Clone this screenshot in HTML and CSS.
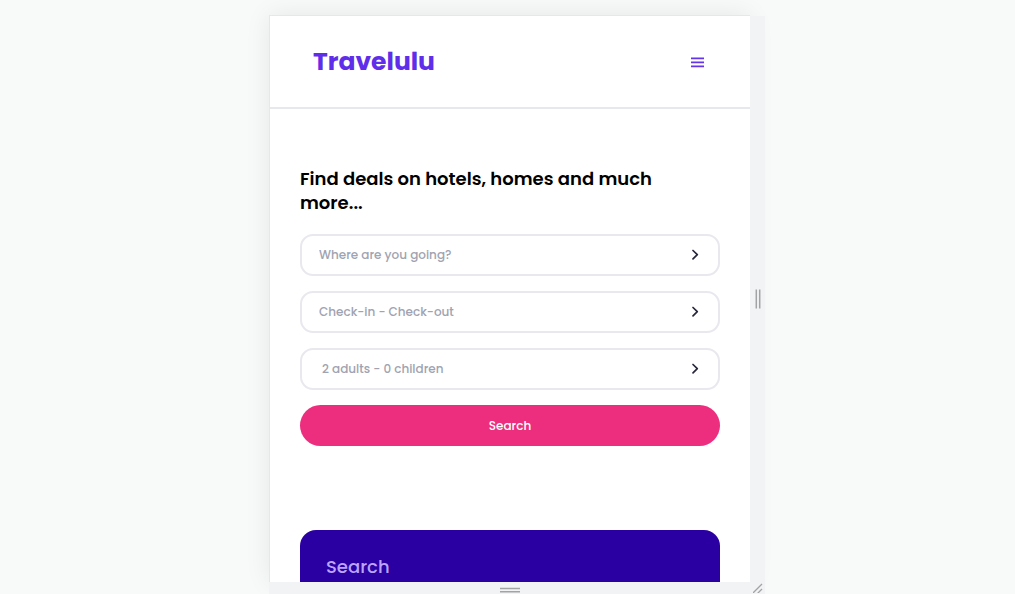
FILE: index.html
```html
<!DOCTYPE html>
<html lang="en">
<head>
<meta charset="utf-8">
<meta name="viewport" content="width=device-width, initial-scale=1">
<title>Travelulu</title>
<link rel="stylesheet" href="styles.css">
</head>
<body>
<div class="stage">
  <div class="device">
    <div class="screen">
      <header class="header">
        <a class="logo" href="#">Travelulu</a>
        <button class="menu" type="button" aria-label="Menu">
          <svg width="13" height="12" viewBox="0 0 13 12" fill="none" stroke="currentColor" stroke-width="1.6"><path d="M0 2.400h13M0 6.400h13M0 10.400h13"/></svg>
        </button>
      </header>
      <main class="main">
        <form class="search">
          <h1 class="title">Find deals on hotels, homes and much more...</h1>
          <label class="field">
            <input class="input" type="text" aria-label="Destination" placeholder="Where are you going?">
            <svg class="chevron" width="8" height="12" viewBox="0 0 8 12"><path d="M2 1.500l4.300 4.200-4.300 4.200"/></svg>
          </label>
          <label class="field">
            <input class="input" type="text" aria-label="Dates" placeholder="Check-in - Check-out">
            <svg class="chevron" width="8" height="12" viewBox="0 0 8 12"><path d="M2 1.500l4.300 4.200-4.300 4.200"/></svg>
          </label>
          <label class="field field-guests">
            <input class="input" type="text" aria-label="Guests" placeholder="2 adults - 0 children">
            <svg class="chevron" width="8" height="12" viewBox="0 0 8 12"><path d="M2 1.500l4.300 4.200-4.300 4.200"/></svg>
          </label>
          <button class="submit" type="submit">Search</button>
        </form>
        <section class="card">
          <h2 class="card-title">Search</h2>
        </section>
      </main>
    </div>
    <div class="rail rail-side">
      <svg width="6" height="20" viewBox="0 0 6 20" stroke="#a2a3a5" stroke-width="1.5"><path d="M1.300 0.500v19M4.700 0.500v19"/></svg>
    </div>
    <div class="rail rail-bottom">
      <svg width="20" height="6" viewBox="0 0 20 6" stroke="#a2a3a5" stroke-width="1.5"><path d="M0 1.500h20M0 4.800h20"/></svg>
    </div>
    <div class="rail rail-corner">
      <svg width="10" height="10" viewBox="0 0 10 10" stroke="#a2a3a5" stroke-width="1.3"><path d="M0 10l9-9M4.500 10.500l4.500-4.500"/></svg>
    </div>
  </div>
</div>
</body>
</html>
```
FILE: styles.css
```css
* {
  box-sizing: border-box;
}

body {
  margin: 0;
  background: #f8faf9;
  color: #000;
  font-family: Poppins, Inter, sans-serif;
}

.stage {
  display: flex;
  justify-content: center;
  height: 100vh;
  padding: 15px 0 0 19px;
  overflow: hidden;
}

.device {
  display: grid;
  grid-template-columns: 1fr 15px;
  grid-template-rows: 1fr 12px;
  width: 100%;
  max-width: 496px;
}

.screen {
  min-height: 0;
  overflow: hidden;
  background: #fff;
  border: 1px solid #e6e8e8;
  border-width: 1px 0 0 1px;
  box-shadow: 0 0 24px rgba(0, 0, 0, 0.08);
}

.rail {
  display: flex;
  align-items: center;
  justify-content: center;
  position: relative;
  background: #f1f3f4;
}

.rail-side {
  margin-top: 1px;
}

.rail-bottom {
  padding-top: 4px;
}

.header {
  display: flex;
  align-items: center;
  justify-content: space-between;
  height: 93px;
  padding: 0 46px 0 43px;
  border-bottom: 2px solid #e6e8ec;
}

.logo {
  color: #5f2eea;
  font-size: 25px;
  font-weight: 700;
  line-height: 40px;
  text-decoration: none;
}

.menu {
  display: flex;
  padding: 0;
  border: 0;
  background: none;
  color: #6434ec;
}

.main {
  padding: 58px 30px 0;
}

.search {
  display: flex;
  flex-direction: column;
  gap: 15px;
}

.title {
  max-width: 90%;
  margin: 0 0 4px;
  font-size: 18px;
  font-weight: 600;
  line-height: 24px;
}

.field {
  display: flex;
  align-items: center;
  height: 42px;
  padding: 0 19px 0 17px;
  border: 2px solid #e8e8ee;
  border-radius: 13px;
}

.field-guests {
  padding-left: 20px;
}

.input {
  flex: 1;
  min-width: 0;
  padding: 0;
  border: 0;
  outline: 0;
  background: none;
  font: 500 12px/20px Poppins, Inter, sans-serif;
}

.input::placeholder {
  color: #a0a3b1;
  opacity: 1;
}

.chevron {
  fill: none;
  stroke: #27273c;
  stroke-width: 1.7;
  stroke-linecap: round;
  stroke-linejoin: round;
}

.submit {
  height: 41px;
  padding: 0;
  border: 0;
  border-radius: 21px;
  background: #ed2e7e;
  color: #fff;
  font: 500 12px/20px Poppins, Inter, sans-serif;
}

.card {
  height: 300px;
  margin-top: 84px;
  padding: 24px 26px;
  border-radius: 16px;
  background: #2a00a2;
}

.card-title {
  margin: 0;
  color: #bca4ff;
  font-size: 18px;
  font-weight: 500;
  line-height: 26px;
}
```
